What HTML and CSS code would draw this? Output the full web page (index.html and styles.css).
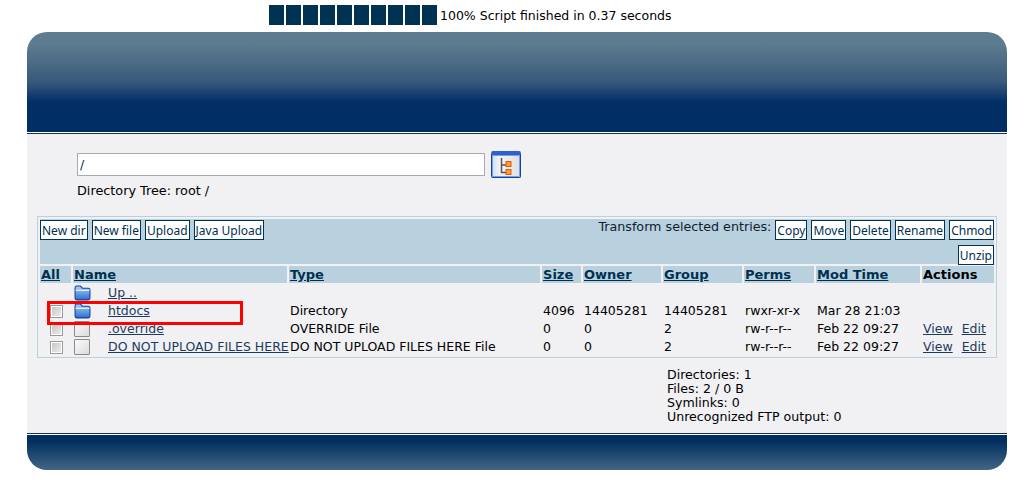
FILE: index.html
```html
<!DOCTYPE html>
<html lang="en">
<head>
    <meta charset="UTF-8">
    <title>FTP</title>
    <link rel="stylesheet" href="styles.css">
</head>
<body>

    <!-- Progress -->
    <div class="progress">
        <div class="blocks">
            <span></span><span></span><span></span><span></span><span></span>
            <span></span><span></span><span></span><span></span><span></span>
        </div>
        <span class="progress-text">100% Script finished in 0.37 seconds</span>
    </div>

    <div class="page">
        <div class="header"></div>

        <div class="content">
            <div class="path-row">
                <input class="path-input" type="text" value="/">
                <button class="tree-button" aria-label="Directory tree">
                    <svg width="16" height="18" viewBox="0 0 16 18">
                        <path d="M3.5 1V15.5H8M3.5 8H8" fill="none" stroke="#555" stroke-width="1.5"/>
                        <rect x="8" y="4.5" width="5" height="5" fill="#f5a623" stroke="#e0542a"/>
                        <rect x="8" y="12.5" width="5" height="5" fill="#f5a623" stroke="#e0542a"/>
                    </svg>
                </button>
            </div>
            <p class="tree-label">Directory Tree: root /</p>

            <div class="browser">
                <div class="toolbar">
                    <div class="toolbar-left">
                        <button class="btn">New dir</button>
                        <button class="btn">New file</button>
                        <button class="btn">Upload</button>
                        <button class="btn">Java Upload</button>
                    </div>
                    <div class="toolbar-right">
                        <span class="transform-label">Transform selected entries:</span>
                        <button class="btn">Copy</button>
                        <button class="btn">Move</button>
                        <button class="btn">Delete</button>
                        <button class="btn">Rename</button>
                        <button class="btn">Chmod</button>
                        <button class="btn">Unzip</button>
                    </div>
                </div>

                <table class="listing">
                    <colgroup>
                        <col class="col-all"><col class="col-icon"><col class="col-name"><col class="col-type">
                        <col class="col-size"><col class="col-owner"><col class="col-group">
                        <col class="col-perms"><col class="col-time"><col class="col-actions">
                    </colgroup>
                    <thead>
                        <tr>
                            <th><a href="#">All</a></th>
                            <th colspan="2"><a href="#">Name</a></th>
                            <th><a href="#">Type</a></th>
                            <th><a href="#">Size</a></th>
                            <th><a href="#">Owner</a></th>
                            <th><a href="#">Group</a></th>
                            <th><a href="#">Perms</a></th>
                            <th><a href="#">Mod Time</a></th>
                            <th class="actions-head">Actions</th>
                        </tr>
                    </thead>
                    <tbody>
                        <tr>
                            <td></td>
                            <td><svg class="icon" viewBox="0 0 16 16"><use href="#folder"/></svg></td>
                            <td><a href="#">Up ..</a></td>
                            <td></td><td></td><td></td><td></td><td></td><td></td><td></td>
                        </tr>
                        <tr>
                            <td><span class="check"></span></td>
                            <td><svg class="icon" viewBox="0 0 16 16"><use href="#folder"/></svg></td>
                            <td><a href="#">htdocs</a></td>
                            <td>Directory</td><td>4096</td><td>14405281</td><td>14405281</td>
                            <td>rwxr-xr-x</td><td>Mar 28 21:03</td><td></td>
                        </tr>
                        <tr>
                            <td><span class="check"></span></td>
                            <td><span class="file"></span></td>
                            <td><a href="#">.override</a></td>
                            <td>OVERRIDE File</td><td>0</td><td>0</td><td>2</td>
                            <td>rw-r--r--</td><td>Feb 22 09:27</td>
                            <td class="actions"><a href="#">View</a><a href="#">Edit</a></td>
                        </tr>
                        <tr>
                            <td><span class="check"></span></td>
                            <td><span class="file"></span></td>
                            <td><a href="#">DO NOT UPLOAD FILES HERE</a></td>
                            <td>DO NOT UPLOAD FILES HERE File</td><td>0</td><td>0</td><td>2</td>
                            <td>rw-r--r--</td><td>Feb 22 09:27</td>
                            <td class="actions"><a href="#">View</a><a href="#">Edit</a></td>
                        </tr>
                    </tbody>
                </table>

                <!-- Red highlight drawn over the htdocs row -->
                <div class="highlight"></div>
            </div>

            <div class="stats">
                <div>Directories: 1</div>
                <div>Files: 2 / 0 B</div>
                <div>Symlinks: 0</div>
                <div>Unrecognized FTP output: 0</div>
            </div>
        </div>

        <div class="footer"></div>
    </div>

    <svg class="defs" width="0" height="0">
        <defs>
            <linearGradient id="folderFill" x1="0" y1="0" x2="0" y2="1">
                <stop offset="0" stop-color="#a9d0f7"/>
                <stop offset="1" stop-color="#2a6fd0"/>
            </linearGradient>
            <g id="folder">
                <path d="M1 2.5C1 1.5 1.5 1 2.5 1H6L8 3H13.5C14.5 3 15 3.5 15 4.5V12.5C15 13.5 14.5 14 13.5 14H2.5C1.5 14 1 13.5 1 12.5Z" fill="url(#folderFill)" stroke="#1a3f9c"/>
                <path d="M1.5 5H14.5" stroke="#e4f0fc" stroke-width="1.2"/>
            </g>
        </defs>
    </svg>

</body>
</html>
```

FILE: styles.css
```css
body {
    margin: 0;
    background: #fff;
    font-family: 'DejaVu Sans', Verdana, sans-serif;
    font-size: 12.5px;
    color: #000;
}

a {
    color: #003050;
}

/* Progress */
.progress {
    display: flex;
    align-items: center;
    height: 32px;
    padding-left: 269px;
    box-sizing: border-box;
    padding-bottom: 2px;
}

.blocks {
    display: flex;
    gap: 2px;
}

.blocks span {
    width: 15px;
    height: 20px;
    background: #003351;
}

.progress-text {
    margin-left: 3px;
}

/* Page frame */
.page {
    width: 980px;
    margin-left: 27px;
}

.header {
    height: 100px;
    border-radius: 20px 20px 0 0;
    background: linear-gradient(#5e7c8f 0, #5e7c8f 12%, #38597c 50%, #012e66 70%, #012e62 100%);
}

.content {
    background: #f1f1f4;
    border-top: 1px solid #fff;
    box-shadow: inset 0 1px 0 #17324c;
    padding: 18px 10px 9px 10px;
    height: 301px;
    box-sizing: border-box;
}

.footer {
    height: 37px;
    border-top: 1px solid #17324c;
    border-radius: 0 0 20px 20px;
    background: linear-gradient(#fff 0, #fff 1px, #01305f 1px, #01305f 20%, #426585 100%);
    box-sizing: border-box;
}

/* Path row */
.path-row {
    display: flex;
    align-items: center;
    gap: 6px;
    padding-left: 40px;
}

.path-input {
    width: 408px;
    height: 23px;
    box-sizing: border-box;
    margin: 0;
    padding: 0 2px;
    border: 1px solid #aaa;
    background: #fff;
    font: inherit;
    color: #003050;
}

.tree-button {
    width: 30px;
    height: 27px;
    padding: 0;
    border: 1px solid #1c3fa0;
    border-top: 4px solid #2c62c9;
    border-radius: 2px;
    box-shadow: inset 0 0 0 1px #6ea2ea;
    background: linear-gradient(90deg, #cfe0f7, #f4f4f4 30%, #dfdfdf);
    display: flex;
    align-items: center;
    justify-content: center;
}

.tree-label {
    margin: 5px 0 17px 40px;
    line-height: 16px;
    font-size: 12.8px;
}

/* File browser box */
.browser {
    position: relative;
    border: 1px solid #b9d0df;
    padding: 2px 2px 1px;
    width: 960px;
    box-sizing: border-box;
}

.toolbar {
    display: flex;
    justify-content: space-between;
    background: #b9d0df;
    height: 45px;
    padding-top: 1px;
    box-sizing: border-box;
}

.toolbar-left {
    display: flex;
    align-items: flex-start;
    gap: 4px;
}

.toolbar-right {
    display: flex;
    flex-wrap: wrap;
    justify-content: flex-end;
    align-items: flex-start;
    gap: 5px 4px;
    width: 396px;
}

.transform-label {
    line-height: 13px;
    font-size: 12.7px;
    color: #10202c;
}

.btn {
    height: 20px;
    margin: 0;
    padding: 0 1px;
    border: 1px solid #003351;
    background: #fff;
    font-family: 'Noto Sans', sans-serif;
    font-size: 12px;
    color: #003050;
    white-space: nowrap;
}

/* Listing */
.listing {
    width: 100%;
    table-layout: fixed;
    border-collapse: separate;
    border-spacing: 0;
    margin-top: 2px;
}

.col-all { width: 33px; }
.col-icon { width: 34px; }
.col-name { width: 182px; }
.col-type { width: 253px; }
.col-size { width: 41px; }
.col-owner { width: 80px; }
.col-group { width: 81px; }
.col-perms { width: 72px; }
.col-time { width: 106px; }

.listing th {
    background: #b9d0df;
    background-clip: padding-box;
    border-right: 2px solid #f1f1f4;
    border-bottom: 1px solid #f1f1f4;
    height: 17px;
    padding: 0 0 0 1px;
    text-align: left;
    font-size: 13px;
    line-height: 17px;
    box-sizing: border-box;
}

.listing th:last-child {
    border-right: 0;
}

.listing th a {
    color: #003050;
}

.actions-head {
    color: #000;
}

.listing td {
    height: 18px;
    padding: 0 0 0 1px;
    white-space: nowrap;
    line-height: 18px;
    overflow: visible;
}

.listing td a {
    color: #1e3a5c;
}

.actions a {
    margin-right: 9px;
}

.icon {
    display: block;
    width: 17px;
    height: 17px;
}

.check {
    display: block;
    width: 13px;
    height: 13px;
    margin-left: 9px;
    border: 1px solid #9a9a9a;
    box-shadow: inset 0 0 0 1px #fff;
    background: linear-gradient(135deg, #c4c4c4, #eee);
    box-sizing: border-box;
}

.file {
    display: block;
    width: 16px;
    height: 16px;
    border: 1px solid #8a8a8a;
    border-radius: 1px;
    background: linear-gradient(135deg, #fafafa, #dcdcdc);
    box-sizing: border-box;
}

.highlight {
    position: absolute;
    left: 9px;
    top: 84px;
    width: 196px;
    height: 24px;
    border: 3px solid #f00;
    box-sizing: border-box;
}

/* Stats */
.stats {
    margin: 10px 0 0 630px;
    line-height: 14px;
    font-size: 12.6px;
}

.defs {
    position: absolute;
}
```
